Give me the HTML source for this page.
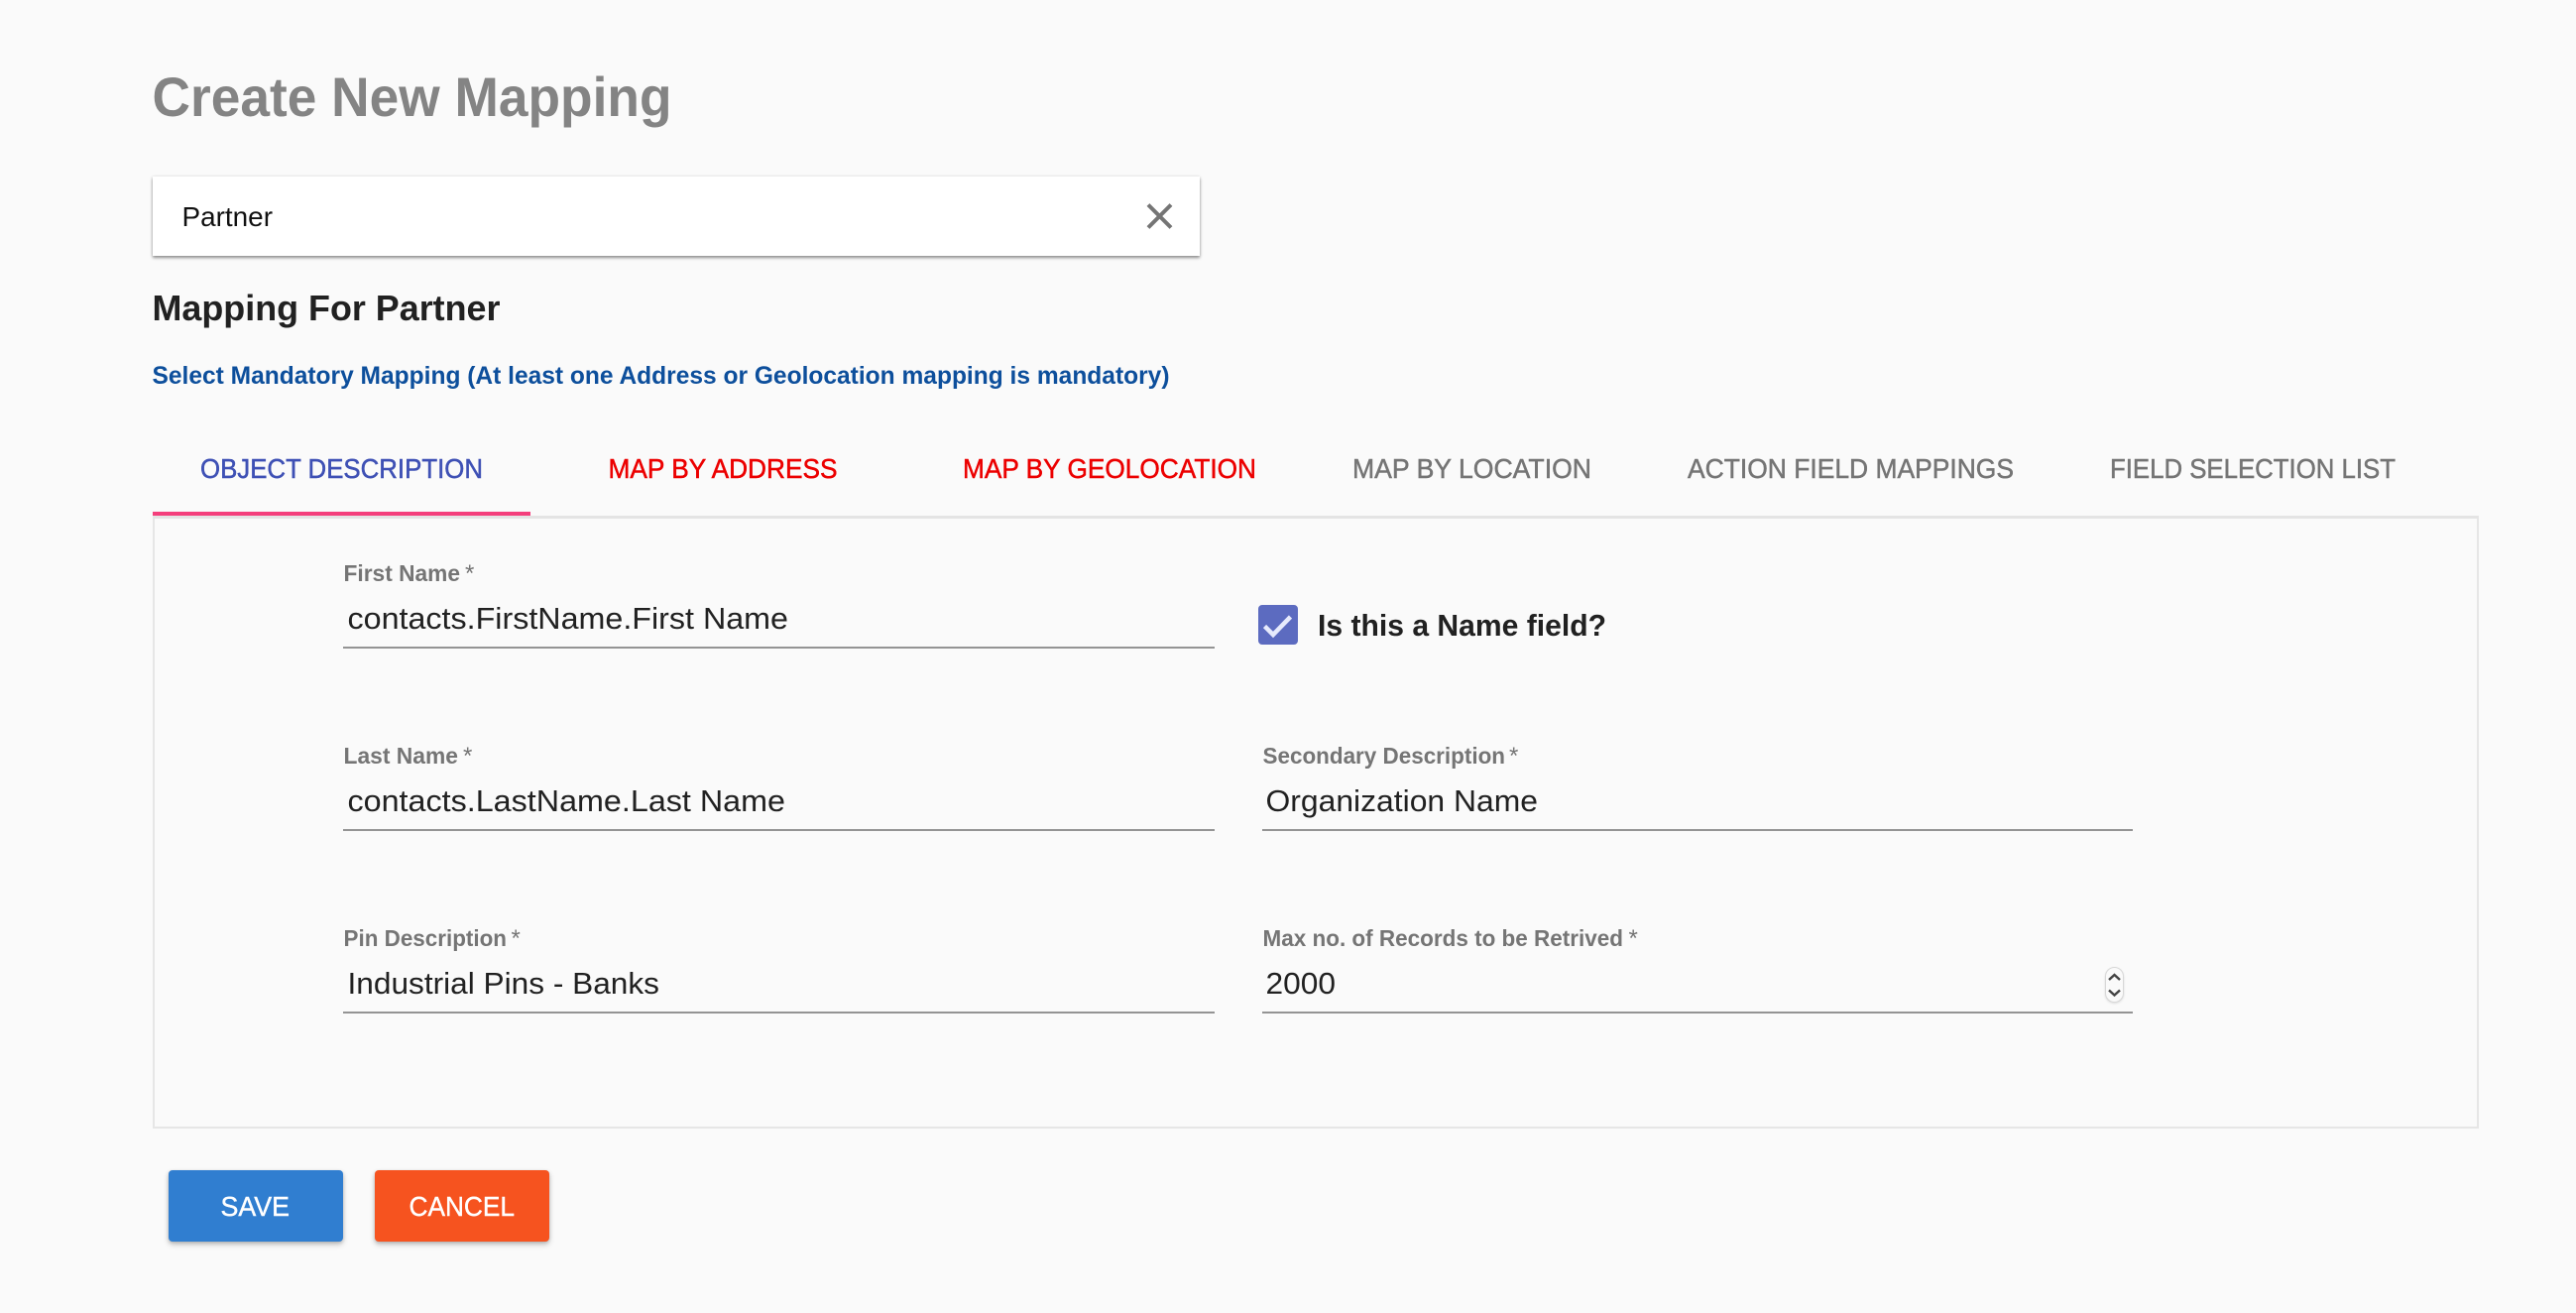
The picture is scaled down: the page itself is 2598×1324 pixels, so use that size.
<!DOCTYPE html>
<html lang="en">
<head>
<meta charset="utf-8">
<title>Create New Mapping</title>
<style>
html,body{margin:0;padding:0;background:#fafafa;width:2598px;height:1324px;overflow:hidden}
.abs{position:absolute;box-sizing:border-box}
svg{position:absolute;left:0;top:0}
text{font-family:"Liberation Sans",Arial,sans-serif;white-space:pre}
.tab{font-size:28px;font-weight:400;stroke-width:.5px}
.lb{font-size:23px;font-weight:700;fill:#757575}
.st{font-size:24px;font-weight:400;fill:#757575}
.v{font-size:31px;fill:#212121}
</style>
</head>
<body>
<div class="abs" style="left:154px;top:178px;width:1056px;height:80px;background:#fff;box-shadow:0 2px 3px rgba(0,0,0,.42),0 0 3px rgba(0,0,0,.1)"></div>
<div class="abs" style="left:154px;top:520px;width:2346px;height:618px;border:2px solid #e6e6e6;border-top:3px solid #e4e4e4"></div>
<div class="abs" style="left:154px;top:516px;width:381px;height:4px;background:#f43f7c"></div>
<div class="abs" style="left:346px;top:652px;width:879px;height:2px;background:#949494"></div>
<div class="abs" style="left:346px;top:836px;width:879px;height:2px;background:#949494"></div>
<div class="abs" style="left:346px;top:1020px;width:879px;height:2px;background:#949494"></div>
<div class="abs" style="left:1273px;top:836px;width:878px;height:2px;background:#949494"></div>
<div class="abs" style="left:1273px;top:1020px;width:878px;height:2px;background:#949494"></div>
<div class="abs" style="left:1269px;top:610px;width:40px;height:40px;background:#5c6bc0;border-radius:4px"></div>
<div class="abs" style="left:2123px;top:975px;width:19px;height:36px;background:#fafafa;border:1px solid #d8d8d8;border-radius:10px;box-shadow:0 1px 2px rgba(0,0,0,.12)"></div>
<div class="abs" style="left:170px;top:1180px;width:176px;height:72px;background:#307ed0;border-radius:4px;box-shadow:0 3px 6px rgba(0,0,0,.22),0 1px 3px rgba(0,0,0,.14)"></div>
<div class="abs" style="left:378px;top:1180px;width:176px;height:72px;background:#f6531f;border-radius:4px;box-shadow:0 3px 6px rgba(0,0,0,.22),0 1px 3px rgba(0,0,0,.14)"></div>

<svg width="2598" height="1324" viewBox="0 0 2598 1324" xmlns="http://www.w3.org/2000/svg">
<text x="153.500" y="117" font-size="56" font-weight="700" fill="#848484" textLength="524" lengthAdjust="spacingAndGlyphs">Create New Mapping</text>
<text x="183.500" y="228" font-size="28" fill="#111" textLength="91.500" lengthAdjust="spacingAndGlyphs">Partner</text>
<path d="M1158 206.500L1181 229.500M1181 206.500L1158 229.500" stroke="#757575" stroke-width="4" fill="none"/>
<text x="153.500" y="323" font-size="36" font-weight="700" fill="#212121" textLength="351" lengthAdjust="spacingAndGlyphs">Mapping For Partner</text>
<text x="153.500" y="387" font-size="25" font-weight="700" fill="#0d4f9c" textLength="1026" lengthAdjust="spacingAndGlyphs">Select Mandatory Mapping (At least one Address or Geolocation mapping is mandatory)</text>

<text class="tab" x="202" y="482" fill="#3f51b5" stroke="#3f51b5" textLength="285" lengthAdjust="spacingAndGlyphs">OBJECT DESCRIPTION</text>
<text class="tab" x="613.500" y="482" fill="#ec0000" stroke="#ec0000" textLength="231" lengthAdjust="spacingAndGlyphs">MAP BY ADDRESS</text>
<text class="tab" x="971" y="482" fill="#ec0000" stroke="#ec0000" textLength="296" lengthAdjust="spacingAndGlyphs">MAP BY GEOLOCATION</text>
<text class="tab" x="1364" y="482" fill="#757575" stroke="#757575" textLength="241" lengthAdjust="spacingAndGlyphs">MAP BY LOCATION</text>
<text class="tab" x="1702" y="482" fill="#757575" stroke="#757575" textLength="329" lengthAdjust="spacingAndGlyphs">ACTION FIELD MAPPINGS</text>
<text class="tab" x="2128" y="482" fill="#757575" stroke="#757575" textLength="288" lengthAdjust="spacingAndGlyphs">FIELD SELECTION LIST</text>

<text class="lb" x="346.500" y="586" textLength="117.500" lengthAdjust="spacingAndGlyphs">First Name</text>
<text class="st" x="469" y="586">*</text>
<text class="v" x="350.500" y="634" textLength="444.500" lengthAdjust="spacingAndGlyphs">contacts.FirstName.First Name</text>

<text class="lb" x="346.500" y="770" textLength="115.500" lengthAdjust="spacingAndGlyphs">Last Name</text>
<text class="st" x="467" y="770">*</text>
<text class="v" x="350.500" y="818" textLength="441.500" lengthAdjust="spacingAndGlyphs">contacts.LastName.Last Name</text>

<text class="lb" x="346.500" y="954" textLength="164.500" lengthAdjust="spacingAndGlyphs">Pin Description</text>
<text class="st" x="515.500" y="954">*</text>
<text class="v" x="350.500" y="1002" textLength="314.500" lengthAdjust="spacingAndGlyphs">Industrial Pins - Banks</text>

<text class="lb" x="1273.500" y="770" textLength="244.500" lengthAdjust="spacingAndGlyphs">Secondary Description</text>
<text class="st" x="1522" y="770">*</text>
<text class="v" x="1276.500" y="818" textLength="274.500" lengthAdjust="spacingAndGlyphs">Organization Name</text>

<text class="lb" x="1273.500" y="954" textLength="363.500" lengthAdjust="spacingAndGlyphs">Max no. of Records to be Retrived</text>
<text class="st" x="1642.500" y="954">*</text>
<text class="v" x="1276.500" y="1002" textLength="70.500" lengthAdjust="spacingAndGlyphs">2000</text>

<path d="M1275.500 631.500L1284 640L1301.500 622" stroke="#e6eafc" stroke-width="4.500" fill="none"/>
<text x="1329" y="641" font-size="31" font-weight="700" fill="#212121" textLength="291" lengthAdjust="spacingAndGlyphs">Is this a Name field?</text>

<path d="M2127 988L2132.500 983L2138 988" stroke="#444" stroke-width="2.400" fill="none"/>
<path d="M2127 998.500L2132.500 1003.500L2138 998.500" stroke="#444" stroke-width="2.400" fill="none"/>

<text x="222.500" y="1226" font-size="28" fill="#fff" stroke="#fff" stroke-width=".4" textLength="69.500" lengthAdjust="spacingAndGlyphs">SAVE</text>
<text x="412.500" y="1226" font-size="28" fill="#fff" stroke="#fff" stroke-width=".4" textLength="106.500" lengthAdjust="spacingAndGlyphs">CANCEL</text>
</svg>
</body>
</html>
